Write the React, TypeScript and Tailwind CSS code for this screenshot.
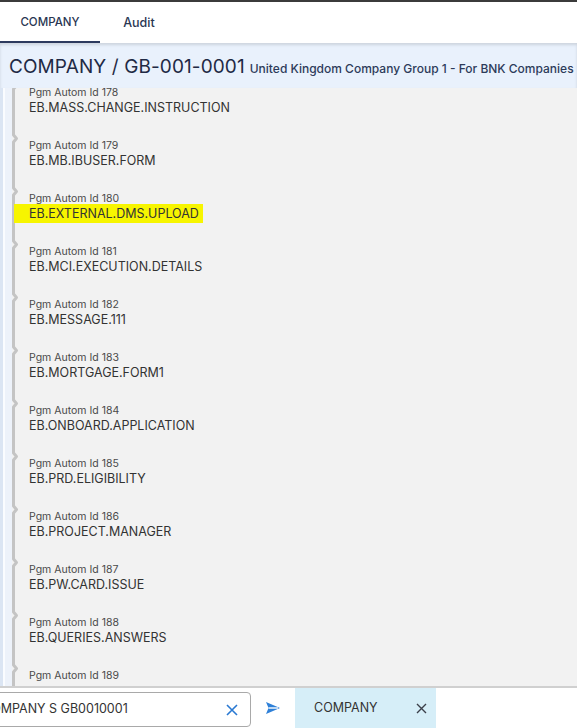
import React from "react";

const items: [number, string][] = [
  [178, "EB.MASS.CHANGE.INSTRUCTION"],
  [179, "EB.MB.IBUSER.FORM"],
  [180, "EB.EXTERNAL.DMS.UPLOAD"],
  [181, "EB.MCI.EXECUTION.DETAILS"],
  [182, "EB.MESSAGE.111"],
  [183, "EB.MORTGAGE.FORM1"],
  [184, "EB.ONBOARD.APPLICATION"],
  [185, "EB.PRD.ELIGIBILITY"],
  [186, "EB.PROJECT.MANAGER"],
  [187, "EB.PW.CARD.ISSUE"],
  [188, "EB.QUERIES.ANSWERS"],
  [189, ""],
];

function Gutter() {
  return (
    <svg width="8" height="53" viewBox="0 0 8 53" className="shrink-0 block">
      <path d="M1.5 0 L1.5 2 L4.5 5.5 L1.5 9 L1.5 53" fill="none" stroke="#c4c4c4" strokeWidth="3" strokeLinejoin="round" />
    </svg>
  );
}

export default function App() {
  return (
    <div
      className="w-[577px] h-[728px] overflow-hidden flex flex-col bg-white text-[#333]"
      style={{ fontFamily: "Inter, 'Open Sans', sans-serif" }}
    >
      {/* Top border */}
      <div className="h-[2px] bg-[#3b3b3b] shrink-0" />
      {/* Tabs */}
      <div className="h-[41px] shrink-0 flex items-stretch bg-white">
        <div className="w-[100px] flex items-center justify-center border-b-2 border-[#2d3a5e] text-[11.5px] font-medium text-[#2a3652] pt-[2px]">
          COMPANY
        </div>
        <div className="w-[78px] flex items-center justify-center text-[12.5px] font-medium text-[#2a3652] pt-[2px]">
          Audit
        </div>
      </div>
      {/* Header band */}
      <div className="h-[45px] shrink-0 bg-[#e9f1fc] shadow-[inset_0_2px_3px_rgba(0,0,0,0.12)] flex items-end pb-[12px] pl-[9px] gap-[5px] whitespace-nowrap z-10">
        <span className="text-[19px] leading-none text-[#1f2a45] tracking-[0.1px]">COMPANY / GB-001-0001</span>
        <span className="text-[12px] leading-none font-medium text-[#2d3b5a] pb-[1px]">
          United Kingdom Company Group 1 - For BNK Companies
        </span>
      </div>
      {/* Content */}
      <div className="flex-1 flex min-h-0 bg-[#f2f2f2]">
        <div className="w-[12px] shrink-0 flex">
          <div className="w-[3px] bg-[#dbe5f3]" />
          <div className="w-[2px] bg-[#fafcff]" />
          <div className="flex-1 bg-[#edf2fa]" />
        </div>
        <div className="flex-1 overflow-hidden">
          <div className="-mt-[8px] flex flex-col">
            {items.map(([id, name]) => (
              <div key={id} className="h-[53px] flex">
                <Gutter />
                <div className="flex flex-col pl-[9px] pt-[6px]">
                  <span className="text-[10.5px] leading-[13px] text-[#4a4a4a]">Pgm Autom Id {id}</span>
                  {name && (
                    <span className="-mt-[2px] leading-[18px]">
                      <span
                        className={
                          "text-[12.5px] text-[#333] " +
                          (id === 180 ? "bg-[#f7f500] -ml-[15px] pl-[15px] pr-[4px] py-[2px]" : "")
                        }
                      >
                        {name}
                      </span>
                    </span>
                  )}
                </div>
              </div>
            ))}
          </div>
        </div>
      </div>
      {/* Bottom bar */}
      <div className="h-[42px] shrink-0 border-t-2 border-[#d0d0d0] bg-white flex items-end">
        <div className="-ml-[31px] mb-[1px] w-[282px] h-[35px] border border-[#a9a9a9] rounded-[4px] flex items-center pl-[12px] pr-[12px]">
          <span className="flex-1 text-[12.5px] text-[#333] whitespace-nowrap">COMPANY S GB0010001</span>
          <svg width="12" height="12" viewBox="0 0 12 12">
            <path d="M1 1 L11 11 M11 1 L1 11" stroke="#2a79d2" strokeWidth="1.6" />
          </svg>
        </div>
        <div className="w-[44px] h-[40px] flex items-center justify-center">
          <svg width="16" height="14" viewBox="0 0 16 14">
            <path d="M1 1 L15 7 L1 13 L3.5 7 Z" fill="#2f80d8" />
            <path d="M3.5 7 L13 7" stroke="#ffffff" strokeWidth="1.4" />
          </svg>
        </div>
        <div className="w-[141px] h-[40px] bg-[#d6eef8] flex items-center pl-[19px] pr-[9px]">
          <span className="flex-1 text-[12.5px] text-[#333]">COMPANY</span>
          <svg width="11" height="11" viewBox="0 0 11 11">
            <path d="M1 1 L10 10 M10 1 L1 10" stroke="#3b3f4a" strokeWidth="1.4" />
          </svg>
        </div>
      </div>
    </div>
  );
}
